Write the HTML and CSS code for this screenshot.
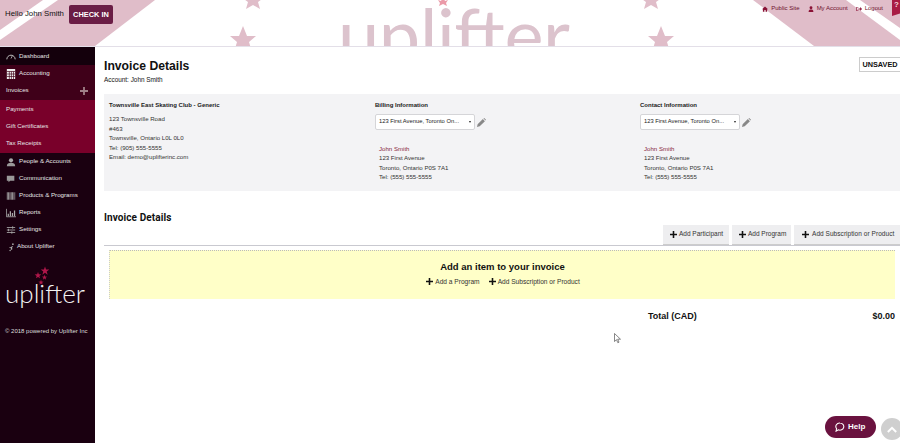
FILE: index.html
```html
<!DOCTYPE html>
<html lang="en">
<head>
<meta charset="utf-8">
<title>Invoice Details</title>
<link rel="stylesheet" href="styles.css">
</head>
<body>
<header class="topbar">
  <svg class="banner-art" width="900" height="46" viewBox="0 0 900 46" aria-hidden="true">
    <polygon class="pink" points="0,0 155,0 95,46 0,46"/>
    <polygon class="white" points="43,0 58,0 0,40 0,30"/>
    <polygon class="pink" points="753,0 900,0 900,46 814,46"/>
    <polygon class="white" points="846,0 860,0 900,28 900,40"/>
    <polygon class="star" points="253,-12 256,-3 265,-3 258,2 260,9 253,5 246,9 248,2 241,-3 250,-3"/>
    <polygon class="star" points="243,26 247,36 256,36 249,42 252,52 243,46 234,52 237,42 230,36 239,36"/>
    <polygon class="star" points="651,-12 654,-3 663,-3 656,2 658,9 651,5 644,9 646,2 639,-3 648,-3"/>
    <polygon class="star" points="661,26 665,36 674,36 667,42 670,52 661,46 652,52 655,42 648,36 657,36"/>
    <polygon class="star-hot" points="443,-3 445,1 448,0 446,3 447,6 443,4 439,6 440,3 438,0 441,1"/>
    <text class="banner-word" x="338" y="62" textLength="232">uplifter</text>
  </svg>
  <div class="greeting">
    <span class="hello">Hello John Smith</span>
    <a class="checkin">CHECK IN</a>
  </div>
  <nav class="toplinks">
    <a class="toplink"><svg class="ti" viewBox="0 0 10 10"><path d="M5 1 0 5.500h1.500V9.500h2.500V6.500h2V9.500h2.500V5.500H10Z"/></svg>Public Site</a>
    <a class="toplink"><svg class="ti" viewBox="0 0 10 10"><circle cx="5" cy="3" r="2.400"/><path d="M1 10c0-3 1.500-4 4-4s4 1 4 4Z"/></svg>My Account</a>
    <a class="toplink"><svg class="ti" viewBox="0 0 10 10"><path d="M0 2h4v1H1v4h3v1H0Z"/><path d="M4 4h3V1.800L10 5 7 8.200V6H4Z"/></svg>Logout</a>
  </nav>
  <span class="corner-tab">?</span>
</header>

<div class="shell">
  <aside class="sidebar">
    <a class="nav nav-active"><svg class="ni" viewBox="0 0 12 10"><path d="M1 9a5 5 0 1 1 10 0" fill="none" stroke="#bbb" stroke-width="1.200"/><path d="M6 8 8 4" stroke="#bbb"/></svg>Dashboard</a>
    <div class="nav-group">
      <a class="nav"><svg class="ni" viewBox="0 0 12 12"><path fill="#eee" d="M1 0h10v12H1Z"/><path stroke="#400018" stroke-width=".8" d="M1 3h10M1 6h10M1 9h10M4 3v9M6.500 3v9M9 3v9"/></svg>Accounting</a>
      <a class="nav nav-sub">Invoices<svg class="plus-side" viewBox="0 0 9 9"><path d="M3.500 0h2v3.500H9v2H5.500V9h-2V5.500H0v-2h3.500Z"/></svg></a>
    </div>
    <div class="subnav">
      <a class="nav nav-sub">Payments</a>
      <a class="nav nav-sub">Gift Certificates</a>
      <a class="nav nav-sub">Tax Receipts</a>
    </div>
    <a class="nav"><svg class="ni" viewBox="0 0 12 10"><circle cx="6" cy="3" r="2.500" fill="#aaa"/><path fill="#999" d="M1 10c0-3 2-4 5-4s5 1 5 4Z"/></svg>People &amp; Accounts</a>
    <a class="nav"><svg class="ni" viewBox="0 0 12 10"><path fill="#999" d="M1 1h9v6H5L3 9V7H1Z"/></svg>Communication</a>
    <a class="nav"><svg class="ni" viewBox="0 0 12 10"><path fill="none" stroke="#aaa" stroke-dasharray="1 .6" stroke-width="9" d="M1 5h10"/></svg>Products &amp; Programs</a>
    <a class="nav"><svg class="ni" viewBox="0 0 12 10"><path fill="none" stroke="#aaa" d="M.5 0v9.500H12"/><path fill="#aaa" d="M2 6h1.500v3H2ZM4.500 3H6v6H4.500ZM7 5h1.500v4H7ZM9.500 2H11v7H9.500Z"/></svg>Reports</a>
    <a class="nav"><svg class="ni" viewBox="0 0 12 10"><path fill="none" stroke="#aaa" d="M1 2h10M1 5h10M1 8h10M8 .5v3M3 3.500v3M7 6.500v3"/></svg>Settings</a>
    <a class="nav nav-about"><svg class="ni ni-small" viewBox="0 0 10 12"><path fill="#aaa" d="M5 5h2v1H6v4H4V7H2V6h3Z"/><circle cx="7" cy="2" r="1.200" fill="#aaa"/><circle cx="3" cy="11" r="1" fill="#aaa"/></svg>About Uplifter</a>
    <div class="side-logo">
      <svg class="side-stars" width="24" height="24" viewBox="0 0 24 24" aria-hidden="true">
        <polygon class="side-star" transform="translate(15 6) scale(4.500)" points="0,-1 .235,-.324 .951,-.309 .38,.124 .588,.809 0,.4 -.588,.809 -.38,.124 -.951,-.309 -.235,-.324"/>
        <polygon class="side-star" transform="translate(8 10.500) scale(3.500)" points="0,-1 .235,-.324 .951,-.309 .38,.124 .588,.809 0,.4 -.588,.809 -.38,.124 -.951,-.309 -.235,-.324"/>
        <polygon class="side-star" transform="translate(14.500 12.500) scale(2.800)" points="0,-1 .235,-.324 .951,-.309 .38,.124 .588,.809 0,.4 -.588,.809 -.38,.124 -.951,-.309 -.235,-.324"/>
        <polygon class="side-star" transform="translate(11 17.500) scale(2.800)" points="0,-1 .235,-.324 .951,-.309 .38,.124 .588,.809 0,.4 -.588,.809 -.38,.124 -.951,-.309 -.235,-.324"/>
      </svg>
      <span class="side-word">uplifter</span>
    </div>
    <p class="powered">© 2018 powered by Uplifter Inc</p>
  </aside>

  <main class="content">
    <div class="title-row">
      <div>
        <h1 class="page-title">Invoice Details</h1>
        <p class="account">Account: John Smith</p>
      </div>
      <span class="unsaved">UNSAVED</span>
    </div>

    <section class="info-panel">
      <div class="info-col">
        <h3 class="info-head">Townsville East Skating Club - Generic</h3>
        <p class="info-text">123 Townsville Road<br>#463<br>Townsville, Ontario L0L 0L0<br>Tel: (905) 555-5555<br>Email: demo@uplifterinc.com</p>
      </div>
      <div class="info-col">
        <h3 class="info-head">Billing Information</h3>
        <div class="select-row">
          <div class="select"><span>123 First Avenue, Toronto On...</span><i class="caret"></i></div>
          <svg class="pencil" viewBox="0 0 10 10"><path d="M0 10l.7-3L6.500 1.200l2.300 2.300L3 9.300ZM7.200.5 8 0l2 2-.5.800Z"/></svg>
        </div>
        <p class="address"><span class="addr-name">John Smith</span><br>123 First Avenue<br>Toronto, Ontario P0S 7A1<br>Tel: (555) 555-5555</p>
      </div>
      <div class="info-col">
        <h3 class="info-head">Contact Information</h3>
        <div class="select-row">
          <div class="select"><span>123 First Avenue, Toronto On...</span><i class="caret"></i></div>
          <svg class="pencil" viewBox="0 0 10 10"><path d="M0 10l.7-3L6.500 1.200l2.300 2.300L3 9.300ZM7.200.5 8 0l2 2-.5.800Z"/></svg>
        </div>
        <p class="address"><span class="addr-name">John Smith</span><br>123 First Avenue<br>Toronto, Ontario P0S 7A1<br>Tel: (555) 555-5555</p>
      </div>
    </section>

    <h2 class="section-title">Invoice Details</h2>
    <div class="tabs">
      <a class="tab"><svg class="plus" viewBox="0 0 9 9"><path d="M3.500 0h2v3.500H9v2H5.500V9h-2V5.500H0v-2h3.500Z"/></svg>Add Participant</a>
      <a class="tab"><svg class="plus" viewBox="0 0 9 9"><path d="M3.500 0h2v3.500H9v2H5.500V9h-2V5.500H0v-2h3.500Z"/></svg>Add Program</a>
      <a class="tab"><svg class="plus" viewBox="0 0 9 9"><path d="M3.500 0h2v3.500H9v2H5.500V9h-2V5.500H0v-2h3.500Z"/></svg>Add Subscription or Product</a>
    </div>
    <section class="empty-box">
      <h4 class="empty-title">Add an item to your invoice</h4>
      <div class="empty-links">
        <a class="empty-link"><svg class="plus" viewBox="0 0 9 9"><path d="M3.500 0h2v3.500H9v2H5.500V9h-2V5.500H0v-2h3.500Z"/></svg>Add a Program</a>
        <a class="empty-link"><svg class="plus" viewBox="0 0 9 9"><path d="M3.500 0h2v3.500H9v2H5.500V9h-2V5.500H0v-2h3.500Z"/></svg>Add Subscription or Product</a>
      </div>
    </section>
    <div class="total-row"><span class="total-label">Total (CAD)</span><span>$0.00</span></div>
  </main>
</div>

<svg class="cursor" width="7" height="11" viewBox="0 0 7 11" aria-hidden="true"><path d="M.5.500v8l2-1.800 1.300 3 1.200-.5-1.300-3h2.800Z" fill="#fff" stroke="#555" stroke-width=".7"/></svg>
<a class="help"><svg class="help-icon" viewBox="0 0 12 12"><path d="M6 1.200a4.600 4.300 0 1 1-2 8.200L1.300 11l.6-3A4.600 4.300 0 0 1 6 1.200Z" fill="none" stroke="#fff" stroke-width="1.300"/></svg>Help</a>
<a class="to-top"><svg class="to-top-icon" viewBox="0 0 12 8"><path d="M1 7l5-5 5 5" fill="none" stroke="#fff" stroke-width="2.400"/></svg></a>
</body>
</html>
```

FILE: styles.css
```css
* { box-sizing: border-box; }
html, body { margin: 0; height: 443px; overflow: hidden; }
body {
  position: relative;
  width: 900px;
  background: #fff;
  color: #111;
  font-family: "Liberation Sans", Arial, sans-serif;
  font-size: 7px;
  line-height: 1.3;
}
p, h1, h2, h3, h4 { margin: 0; }

.topbar {
  position: relative;
  height: 47px;
  border-bottom: 1px solid #e3dfe8;
  overflow: hidden;
  display: flex;
  justify-content: space-between;
  align-items: flex-start;
}
.banner-art { position: absolute; left: 0; top: 0; }
.pink { fill: #e0bdc9; }
.white { fill: #fff; }
.star { fill: #e0bdc9; }
.star-hot { fill: #eb9aa8; }
.banner-word {
  font-family: "Lato", sans-serif;
  font-weight: 400;
  font-size: 74px;
  fill: #dcc3cd;
}
.greeting {
  position: relative;
  display: flex;
  align-items: center;
  gap: 5px;
  padding: 5px 0 0 5px;
}
.hello { font-size: 7.800px; color: #111; }
.checkin {
  background: #6a1d45;
  color: #fff;
  font-size: 7.400px;
  font-weight: bold;
  height: 19px;
  width: 44px;
  justify-content: center;
  border-radius: 2px;
  display: flex;
  align-items: center;
}
.toplinks {
  position: relative;
  display: flex;
  gap: 8px;
  padding: 5px 17px 0 0;
}
.toplink { display: flex; align-items: center; gap: 3px; color: #6e0f2c; font-size: 6px; }
.ti { width: 6px; height: 6px; fill: #8a1236; }
.corner-tab {
  position: absolute;
  right: 0;
  top: 0;
  width: 8px;
  height: 16px;
  background: #a81b44;
  color: #f3d5dc;
  font-size: 8px;
  font-weight: bold;
  padding-left: 2px;
  clip-path: polygon(0 0, 100% 0, 100% 85%, 0 100%);
}

.shell { display: flex; height: 396px; }
.sidebar { width: 95px; flex: none; background: #1a0010; color: #eee; }
.nav {
  display: flex;
  align-items: center;
  height: 17px;
  padding-left: 6px;
  gap: 3px;
  color: #e6e6e6;
  font-size: 6.200px;
  white-space: nowrap;
}
.nav-active { height: 18px; background: #14000c; }
.nav-group { background: #3f0019; padding-bottom: 1px; }
.nav-sub { position: relative; padding-left: 6px; }
.nav-about { padding-left: 8px; gap: 2px; }
.subnav { background: #79002a; padding: 1px 0; }
.ni { width: 10px; height: 10px; flex: none; }
.ni-small { width: 7px; }
.plus-side { position: absolute; right: 7px; top: 5px; width: 8px; height: 8px; fill: #a08088; }
.side-logo {
  position: relative;
  height: 63px;
  margin-top: 10px;
}
.side-stars { display: block; margin-left: 30px; }
.side-star { fill: #b0164a; }
.side-word {
  position: absolute;
  left: 5px;
  top: 13px;
  font-family: "Lato", sans-serif;
  font-weight: 300;
  font-size: 26px;
  line-height: 1.2;
  color: #f2f2f2;
}
.powered { font-size: 6px; padding-left: 5px; margin-top: 0; color: #ddd; white-space: nowrap; }

.content { flex: 1; padding: 0 0 0 9px; min-width: 0; }
.title-row {
  display: flex;
  justify-content: space-between;
  align-items: flex-start;
  height: 47px;
  padding-top: 10px;
}
.page-title { font-size: 12.200px; line-height: 18px; font-weight: bold; color: #111; }
.account { font-size: 6.400px; line-height: 9px; }
.unsaved {
  width: 41px;
  height: 15px;
  border: 1px solid #ccc;
  border-right: 0;
  background: #fff;
  font-size: 7.300px;
  font-weight: bold;
  display: flex;
  align-items: center;
  justify-content: center;
  color: #111;
}
.info-panel {
  display: grid;
  grid-template-columns: 266px 265px 1fr;
  height: 97px;
  background: #f3f3f5;
  padding: 7px 0 0 5px;
}
.info-head { font-size: 6px; font-weight: bold; line-height: 9px; color: #222; }
.info-text { font-size: 6.100px; line-height: 9.500px; margin-top: 4px; color: #333; }
.select-row { display: flex; align-items: center; gap: 2px; margin-top: 4px; }
.select {
  width: 100px;
  height: 16px;
  background: #fff;
  border: 1px solid #d5d5d8;
  border-radius: 2px;
  display: flex;
  align-items: center;
  justify-content: space-between;
  padding: 0 3px 0 3px;
  font-size: 5.800px;
  white-space: nowrap;
  color: #222;
}
.caret {
  border-left: 1.500px solid transparent;
  border-right: 1.500px solid transparent;
  border-top: 2.500px solid #222;
}
.pencil { width: 9px; height: 9px; fill: #888; }
.address { font-size: 6.100px; line-height: 9.500px; margin: 13.500px 0 0 4px; color: #333; }
.addr-name { color: #8a2a3f; }

.section-title { font-family: "Roboto", sans-serif; font-size: 10px; font-weight: 700; line-height: 13px; margin-top: 20px; letter-spacing: .1px; color: #111; }
.tabs {
  display: flex;
  justify-content: flex-end;
  gap: 3px;
  height: 21px;
  margin-top: 1px;
  border-bottom: 1px solid #c9c9d0;
}
.tab {
  display: flex;
  align-items: center;
  gap: 2px;
  height: 20px;
  padding: 0 0 0 7px;
  background: #eeeef0;
  border-bottom: 1px solid #ccc;
  font-size: 6.500px;
  color: #333;
  white-space: nowrap;
}
.tab:nth-child(1) { width: 66px; }
.tab:nth-child(2) { width: 59px; }
.tab:nth-child(3) { width: 106px; padding-left: 8px; gap: 3px; letter-spacing: .05px; }
.plus { width: 7px; height: 7px; fill: #111; flex: none; }
.empty-box {
  height: 49px;
  margin: 4px 5px 0;
  background: #ffffc8;
  border-left: 1px dotted #ccc;
  border-top: 1px dotted #bbb;
  display: flex;
  flex-direction: column;
  align-items: center;
  padding-top: 10px;
}
.empty-title { font-size: 9.500px; font-weight: bold; line-height: 12px; color: #111; }
.empty-links { display: flex; gap: 9px; margin-top: 4px; margin-left: 1px; }
.empty-link { display: flex; align-items: center; gap: 2px; font-size: 6.600px; line-height: 9px; color: #333; }
.total-row {
  display: flex;
  justify-content: space-between;
  padding: 11px 5px 0 544px;
  font-size: 9px;
  font-weight: bold;
  line-height: 12px;
}

.cursor { position: absolute; left: 614px; top: 333px; }
.help {
  position: absolute;
  left: 825px;
  top: 416px;
  width: 51px;
  height: 22px;
  border-radius: 11px;
  background: #6a123f;
  color: #fff;
  font-size: 8px;
  font-weight: bold;
  display: flex;
  align-items: center;
  gap: 3px;
  padding-left: 10px;
}
.help-icon { width: 10px; height: 10px; }
.to-top {
  position: absolute;
  left: 881px;
  top: 418px;
  width: 22px;
  height: 22px;
  border-radius: 50%;
  background: #cfcfcf;
  display: flex;
  align-items: center;
  padding-left: 6px;
}
.to-top-icon { width: 10px; height: 7px; }
```
